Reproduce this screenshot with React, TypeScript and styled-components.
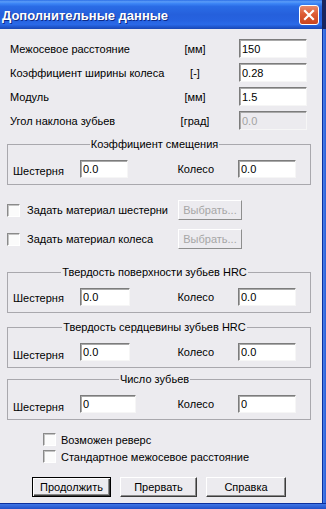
import { Fragment } from "react";
import styled, { createGlobalStyle } from "styled-components";

const GlobalStyle = createGlobalStyle`
  html, body {
    margin: 0;
    padding: 0;
    background: #ecebef;
  }
  body {
    font-family: "Liberation Sans", Arial, sans-serif;
    font-size: 11px;
    color: #000;
  }
  #root {
    width: 326px;
    height: 509px;
  }
`;

const Window = styled.div`
  width: 326px;
  height: 509px;
  display: flex;
  flex-direction: column;
  overflow: hidden;
`;

const TitleBar = styled.div`
  height: 29px;
  flex: none;
  box-sizing: border-box;
  display: flex;
  align-items: center;
  justify-content: space-between;
  padding: 0 3px 0 2px;
  border-right: 4px solid #18245e;
  background: linear-gradient(
    to bottom,
    #2c6ee6 0%,
    #5a9cf8 6%,
    #3d86f6 12%,
    #2a6ce6 22%,
    #2560dc 50%,
    #2662e0 70%,
    #2a6ae8 84%,
    #2158d0 92%,
    #1a48b4 100%
  );
`;

const Caption = styled.span`
  font-family: "Liberation Sans", Arial, sans-serif;
  font-weight: bold;
  font-size: 13px;
  color: #fff;
  text-shadow: 1px 1px #0c2a86;
  margin-top: 2px;
`;

const CloseButton = styled.button`
  width: 20px;
  height: 20px;
  margin-top: 1px;
  padding: 0;
  box-sizing: border-box;
  display: flex;
  align-items: center;
  justify-content: center;
  border: 1px solid #fff;
  border-radius: 3px;
  background: linear-gradient(to bottom, #e98a6c 0%, #dd5b34 45%, #c9441f 100%);
`;

const Middle = styled.div`
  flex: 1;
  display: flex;
`;

const Body = styled.div`
  flex: 1;
  display: flex;
  flex-direction: column;
  padding: 10px 11px 0 7px;
  background: #ecebef;
`;

const RightFrame = styled.div`
  width: 4px;
  flex: none;
  box-sizing: border-box;
  border-left: 1px solid #0c2f9e;
  background: linear-gradient(to right, #4a80ea, #2a5ed6);
`;

const BottomFrame = styled.div`
  height: 6px;
  flex: none;
  box-sizing: border-box;
  border-top: 1px solid #0c2f9e;
  background: linear-gradient(to bottom, #3f76e6, #2150c8);
`;

const ParamGrid = styled.div`
  display: grid;
  grid-template-columns: 165px 64px 68px;
  row-gap: 5px;
  align-items: center;
  margin-left: 3px;
`;

const Unit = styled.span`
  text-align: center;
  padding-right: 24px;
`;

const Field = styled.input<{ $w: number; $h?: number }>`
  box-sizing: border-box;
  width: ${(p) => p.$w}px;
  height: ${(p) => p.$h ?? 18}px;
  margin: 0;
  padding: 0 0 0 2px;
  font: inherit;
  font-size: 11px;
  color: #000;
  background: #fff;
  border: 1px solid;
  border-color: #7c7c7c #f6f6f6 #f6f6f6 #7c7c7c;
  box-shadow: inset 1px 1px #a9a9a9;
  outline: none;

  &:disabled {
    background: #ecebef;
    color: #a3a3a3;
  }
`;

const Group = styled.fieldset<{ $mt: number }>`
  margin: ${(p) => p.$mt}px 0 0 0;
  padding: 9px 14px 6px 5px;
  border: 1px solid #a9a8ad;
  min-inline-size: auto;
`;

const Legend = styled.legend`
  margin: 0 auto;
  padding: 0 1px;
  line-height: 13px;
  font-size: 11px;
`;

const PairRow = styled.div`
  display: grid;
  grid-template-columns: 67px auto 1fr 58px;
  align-items: center;
`;

const PairLabel = styled.span<{ $dy?: number }>`
  position: relative;
  top: ${(p) => p.$dy ?? 0}px;
`;

const WheelLabel = styled.span`
  text-align: right;
  padding-right: 24px;
`;

const MaterialRow = styled.div<{ $mt: number }>`
  display: grid;
  grid-template-columns: 171px 64px;
  align-items: center;
  height: 20px;
  margin-top: ${(p) => p.$mt}px;
`;

const CheckLabel = styled.label<{ $gap: number }>`
  display: flex;
  align-items: center;
  gap: ${(p) => p.$gap}px;
`;

const Check = styled.input`
  appearance: none;
  box-sizing: border-box;
  width: 13px;
  height: 13px;
  margin: 0;
  flex: none;
  background: #fbfbfb;
  border: 1px solid;
  border-color: #8a8a8a #ffffff #ffffff #8a8a8a;
  box-shadow: inset 1px 1px #c4c4c4;
`;

const OptionList = styled.div`
  display: flex;
  flex-direction: column;
  gap: 4px;
  margin-top: 13px;
  padding-left: 36px;
`;

const OptionRow = styled.div`
  height: 13px;
  display: flex;
  align-items: center;
`;

const Button = styled.button<{ $w: number; $default?: boolean }>`
  box-sizing: border-box;
  width: ${(p) => p.$w}px;
  height: 20px;
  margin: 0;
  padding: 0;
  font: inherit;
  font-size: 11px;
  color: #000;
  background: #ecebef;
  border: 1px solid;
  border-color: #ffffff #3c3c3c #3c3c3c #ffffff;
  box-shadow: inset -1px -1px #8a8a8a;

  ${(p) =>
    p.$default &&
    `
    border-color: #000;
    box-shadow: inset 1px 1px #fff, inset -1px -1px #3c3c3c, inset -2px -2px #8a8a8a;
  `}

  &:disabled {
    color: #a6a6a6;
    border-color: #ffffff #8e8e8e #8e8e8e #ffffff;
    box-shadow: none;
  }
`;

const ButtonBar = styled.div`
  display: flex;
  gap: 9px;
  margin-top: 14px;
  padding-left: 25px;
`;

const params = [
  { label: "Межосевое расстояние", unit: "[мм]", value: "150" },
  { label: "Коэффициент ширины колеса", unit: "[-]", value: "0.28" },
  { label: "Модуль", unit: "[мм]", value: "1.5" },
  { label: "Угол наклона зубьев", unit: "[град]", value: "0.0", disabled: true },
];

const groups = [
  { title: "Твердость поверхности зубьев HRC", value: "0.0", mt: 17, w: 50, dy: 1 },
  { title: "Твердость сердцевины зубьев HRC", value: "0.0", mt: 8, w: 50, dy: 3 },
  { title: "Число зубьев", value: "0", mt: 5, w: 56, dy: 3 },
];

function PairFields({ value, w, dy }: { value: string; w: number; dy: number }) {
  return (
    <PairRow>
      <PairLabel $dy={dy}>Шестерня</PairLabel>
      <Field $w={w} defaultValue={value} />
      <WheelLabel>Колесо</WheelLabel>
      <Field $w={58} defaultValue={value} />
    </PairRow>
  );
}

export default function App() {
  return (
    <Window>
      <GlobalStyle />
      <TitleBar>
        <Caption>Дополнительные данные</Caption>
        <CloseButton aria-label="Закрыть">
          <svg width="12" height="12" viewBox="0 0 12 12">
            <path d="M2 2 L10 10 M10 2 L2 10" stroke="#fff" strokeWidth="2.2" strokeLinecap="square" />
          </svg>
        </CloseButton>
      </TitleBar>
      <Middle>
        <Body>
          <ParamGrid>
            {params.map((p) => (
              <Fragment key={p.label}>
                <span>{p.label}</span>
                <Unit>{p.unit}</Unit>
                <Field $w={68} $h={19} defaultValue={p.value} disabled={p.disabled} />
              </Fragment>
            ))}
          </ParamGrid>

          <Group $mt={8}>
            <Legend>Коэффициент смещения</Legend>
            <PairFields value="0.0" w={48} dy={2} />
          </Group>

          <MaterialRow $mt={15}>
            <CheckLabel $gap={7}>
              <Check type="checkbox" />
              Задать материал шестерни
            </CheckLabel>
            <Button $w={64} disabled>
              Выбрать...
            </Button>
          </MaterialRow>
          <MaterialRow $mt={9}>
            <CheckLabel $gap={7}>
              <Check type="checkbox" />
              Задать материал колеса
            </CheckLabel>
            <Button $w={64} disabled>
              Выбрать...
            </Button>
          </MaterialRow>

          {groups.map((g) => (
            <Group key={g.title} $mt={g.mt}>
              <Legend>{g.title}</Legend>
              <PairFields value={g.value} w={g.w} dy={g.dy} />
            </Group>
          ))}

          <OptionList>
            <OptionRow>
              <CheckLabel $gap={5}>
                <Check type="checkbox" />
                Возможен реверс
              </CheckLabel>
            </OptionRow>
            <OptionRow>
              <CheckLabel $gap={5}>
                <Check type="checkbox" />
                Стандартное межосевое расстояние
              </CheckLabel>
            </OptionRow>
          </OptionList>

          <ButtonBar>
            <Button $w={79} $default>
              Продолжить
            </Button>
            <Button $w={77}>Прервать</Button>
            <Button $w={80}>Справка</Button>
          </ButtonBar>
        </Body>
        <RightFrame />
      </Middle>
      <BottomFrame />
    </Window>
  );
}
